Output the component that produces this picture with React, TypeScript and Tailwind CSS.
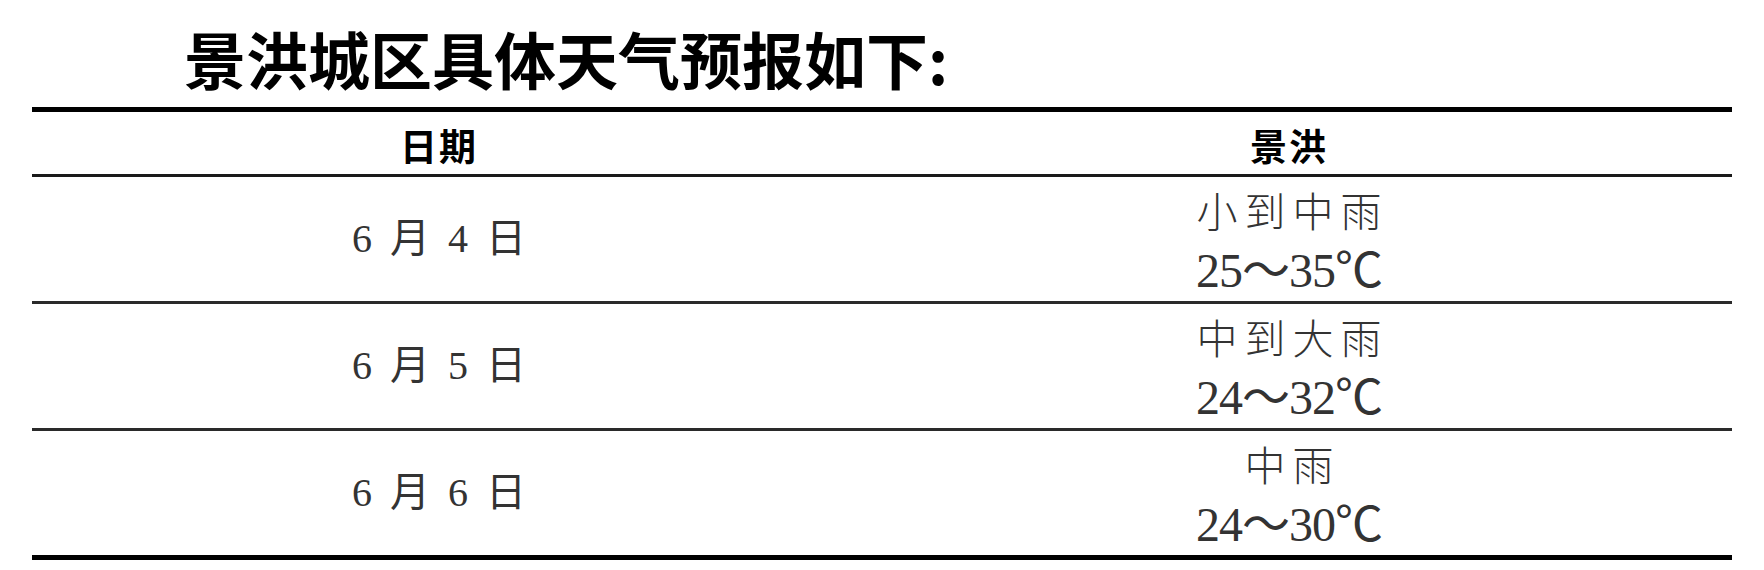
const rows = [
  { date: ['6', '月', '4', '日'], weather: '小到中雨', temp: '25～35℃' },
  { date: ['6', '月', '5', '日'], weather: '中到大雨', temp: '24～32℃' },
  { date: ['6', '月', '6', '日'], weather: '中雨', temp: '24～30℃' },
];

const bodyFont = "font-['Liberation_Serif','Noto_Sans_CJK_SC',serif]";

export default function App() {
  return (
    <div className="w-[1764px] h-[570px] bg-white text-black">
      <div className="pl-[32px] w-[1732px]">
        {/* Heading */}
        <h1 className="pl-[152px] pt-[22px] h-[107px] text-[62px] leading-[72px] font-bold font-['Noto_Sans_CJK_SC',sans-serif]">
          景洪城区具体天气预报如下:
        </h1>

        {/* Forecast table */}
        <table className="w-[1700px] border-collapse border-t-[5px] border-b-[5px] border-black">
          <thead>
            <tr className="h-[66px] border-b-[3px] border-[#1a1a1a]">
              <th className="w-[814px] pt-[6px] text-[37px] font-bold font-['Noto_Sans_CJK_SC',sans-serif] tracking-[2px]">日期</th>
              <th className="pt-[6px] text-[37px] font-bold font-['Noto_Sans_CJK_SC',sans-serif] tracking-[2px]">景洪</th>
            </tr>
          </thead>
          <tbody>
            {rows.map((r, i) => (
              <tr key={i} className={`h-[127px] ${i < rows.length - 1 ? 'border-b-[3px] border-[#2a2a2a]' : ''}`}>
                <td className="text-center">
                  <span className={`${bodyFont} text-[40px] text-[#333] inline-flex gap-[18px] items-baseline`}>
                    {r.date.map((d, j) => (
                      <span key={j}>{d}</span>
                    ))}
                  </span>
                </td>
                <td className="text-center">
                  <div className="flex flex-col items-center">
                    <span className="text-[41px] leading-[64px] font-light text-[#333] font-['Noto_Sans_CJK_SC',sans-serif] tracking-[7px] pl-[7px]">
                      {r.weather}
                    </span>
                    <span className={`${bodyFont} text-[48px] leading-[60px] text-[#333] tracking-[-1px]`}>
                      {r.temp}
                    </span>
                  </div>
                </td>
              </tr>
            ))}
          </tbody>
        </table>
      </div>
    </div>
  );
}
